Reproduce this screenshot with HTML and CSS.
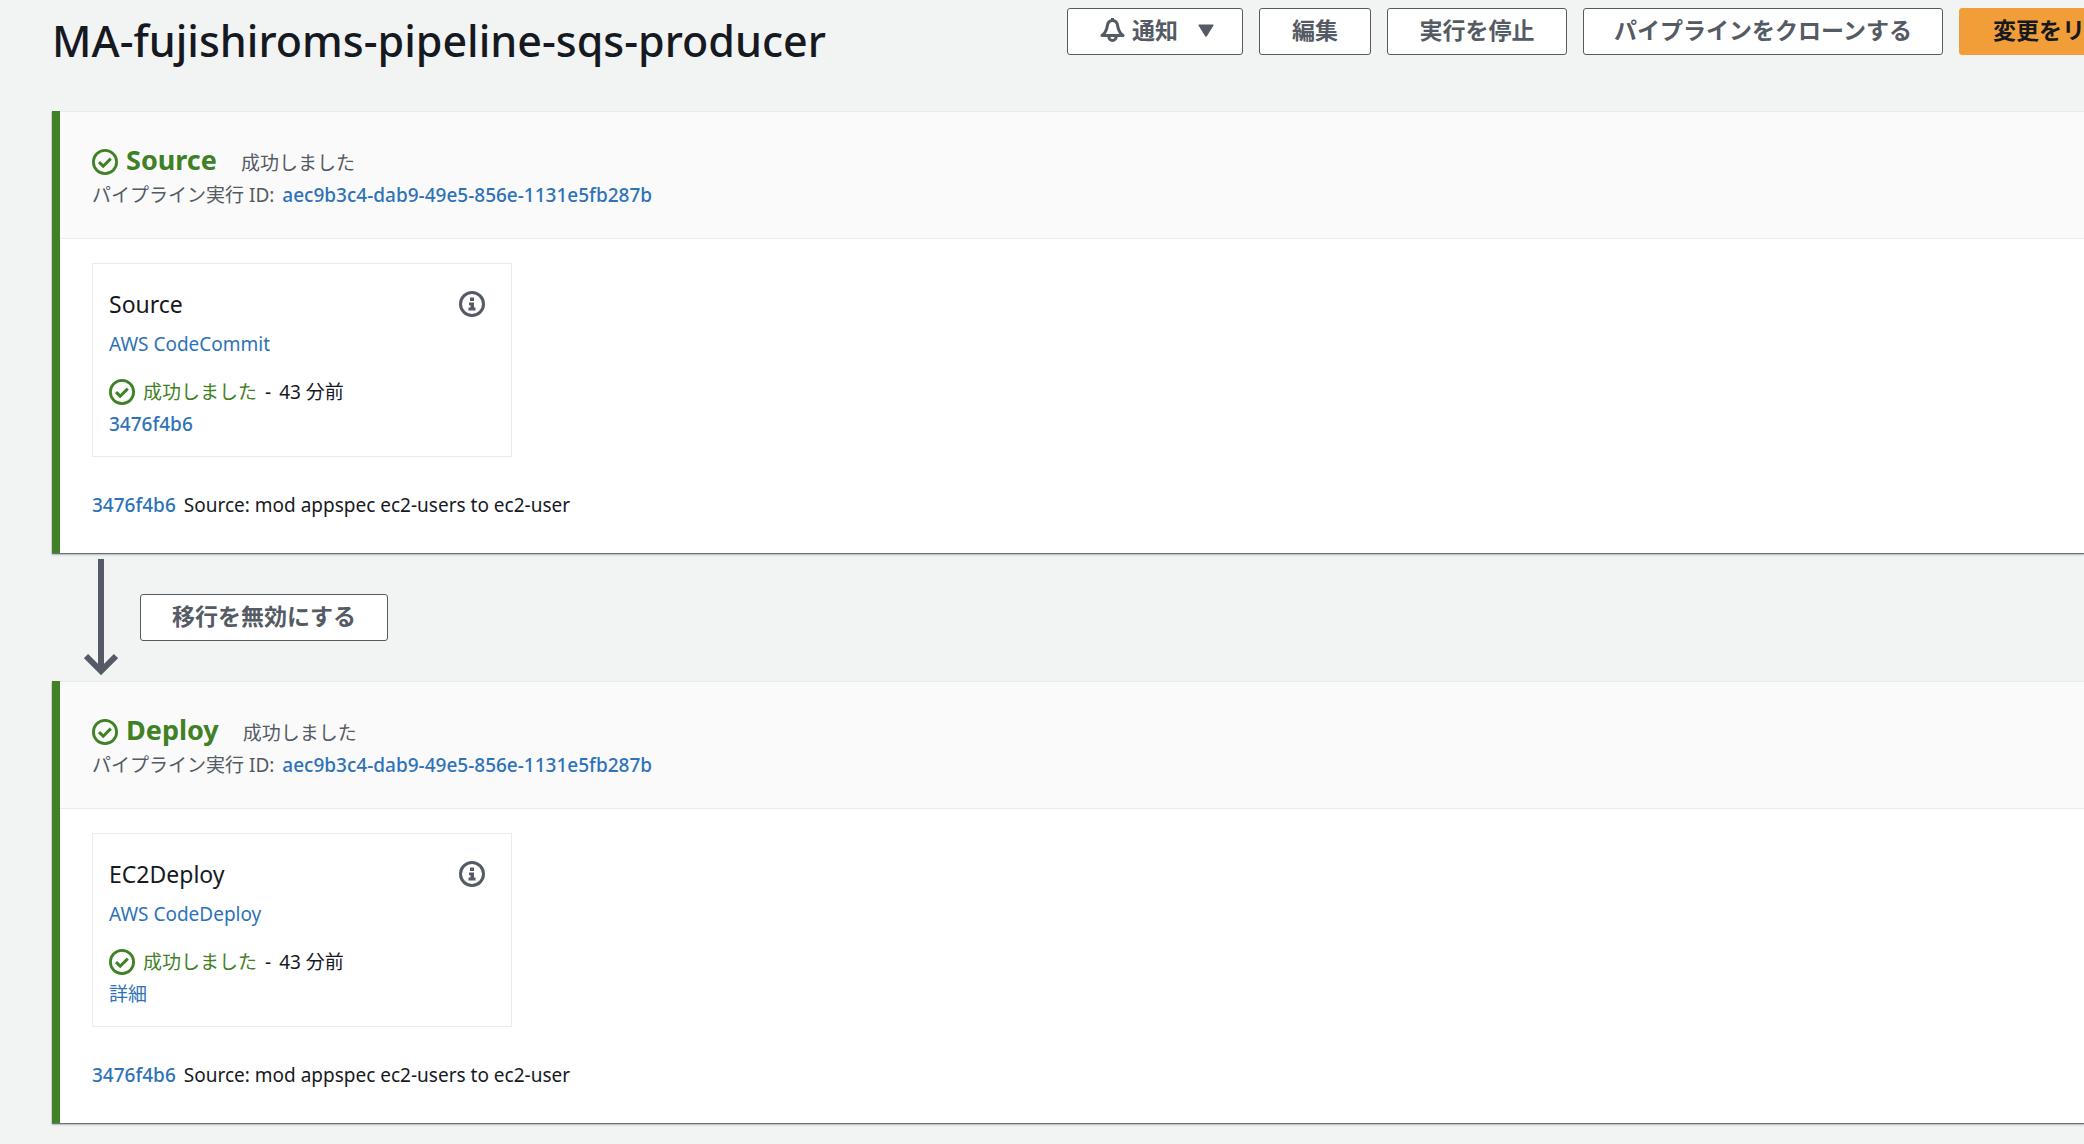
FILE: index.html
```html
<!DOCTYPE html>
<html lang="ja">
<head>
<meta charset="utf-8">
<meta name="viewport" content="width=device-width, initial-scale=1">
<title>MA-fujishiroms-pipeline-sqs-producer</title>
<link rel="stylesheet" href="styles.css">
</head>
<body>
<svg class="sprite" aria-hidden="true">
  <symbol id="check" viewBox="0 0 26 26">
    <circle cx="13" cy="13" r="11.6" fill="none" stroke="currentColor" stroke-width="2.8"/>
    <path d="M7 13.2l4.2 4 7.6-7.6" fill="none" stroke="currentColor" stroke-width="3"/>
  </symbol>
  <symbol id="info" viewBox="0 0 26 26">
    <circle cx="13" cy="13" r="11.5" fill="none" stroke="currentColor" stroke-width="3"/>
    <path d="M11 6.5h4v3.4h-4zM10 11.4h5v5h1.5v3h-7v-3h2v-2.2H10z" fill="currentColor"/>
  </symbol>
</svg>
<main class="page">
  <header class="page-header">
    <h1 class="page-title">MA-fujishiroms-pipeline-sqs-producer</h1>
    <div class="actions">
      <button type="button" class="button button--notify">
        <svg class="bell" viewBox="0 0 25 26" aria-hidden="true">
          <path d="M2 18.500C6 15.500 6.800 12.500 7.300 9C7.800 5.600 9.500 3.500 12.500 3.500S17.200 5.600 17.700 9C18.200 12.500 19 15.500 23 18.500Z" fill="none" stroke="currentColor" stroke-width="3" stroke-linejoin="round"/>
          <path d="M12.500 1v3M8.800 19.500a3.700 4 0 0 0 7.400 0" fill="none" stroke="currentColor" stroke-width="3"/>
        </svg>
        <span>通知</span>
        <svg class="caret" viewBox="0 0 16 13" aria-hidden="true"><path d="M1 .5h14q1 0 .5 1L9 12q-1 1.500-2 0L.5 1.500Q0 .5 1 .5z" fill="currentColor"/></svg>
      </button>
      <button type="button" class="button">編集</button>
      <button type="button" class="button button--stop">実行を停止</button>
      <button type="button" class="button button--clone">パイプラインをクローンする</button>
      <button type="button" class="button button--primary">変更をリ</button>
    </div>
  </header>

  <section class="stage">
    <header class="stage-header">
      <div class="stage-heading">
        <svg class="icon icon--success"><use href="#check"/></svg>
        <h2 class="stage-name">Source</h2>
        <span class="stage-status">成功しました</span>
      </div>
      <p class="execution"><span>パイプライン実行 ID:</span><a class="hash" href="#execution">aec9b3c4-dab9-49e5-856e-1131e5fb287b</a></p>
    </header>
    <div class="stage-body">
      <article class="action">
        <div class="action-heading">
          <h3 class="action-name">Source</h3>
          <button type="button" class="info" aria-label="情報"><svg class="icon"><use href="#info"/></svg></button>
        </div>
        <a class="provider" href="#codecommit">AWS CodeCommit</a>
        <p class="action-status"><svg class="icon icon--success"><use href="#check"/></svg><span class="success">成功しました</span><span>-</span><span>43 分前</span></p>
        <a class="detail hash" href="#commit">3476f4b6</a>
      </article>
      <p class="revision"><a class="hash" href="#commit">3476f4b6</a><span>Source: mod appspec ec2-users to ec2-user</span></p>
    </div>
  </section>

  <div class="transition">
    <svg class="arrow" viewBox="0 0 34 117" aria-hidden="true"><path d="M17 0v112M2 97l15 15 15-15" fill="none" stroke="currentColor" stroke-width="6"/></svg>
    <button type="button" class="button button--transition">移行を無効にする</button>
  </div>

  <section class="stage">
    <header class="stage-header">
      <div class="stage-heading">
        <svg class="icon icon--success"><use href="#check"/></svg>
        <h2 class="stage-name">Deploy</h2>
        <span class="stage-status">成功しました</span>
      </div>
      <p class="execution"><span>パイプライン実行 ID:</span><a class="hash" href="#execution">aec9b3c4-dab9-49e5-856e-1131e5fb287b</a></p>
    </header>
    <div class="stage-body">
      <article class="action">
        <div class="action-heading">
          <h3 class="action-name">EC2Deploy</h3>
          <button type="button" class="info" aria-label="情報"><svg class="icon"><use href="#info"/></svg></button>
        </div>
        <a class="provider" href="#codedeploy">AWS CodeDeploy</a>
        <p class="action-status"><svg class="icon icon--success"><use href="#check"/></svg><span class="success">成功しました</span><span>-</span><span>43 分前</span></p>
        <a class="detail" href="#deployment">詳細</a>
      </article>
      <p class="revision"><a class="hash" href="#commit">3476f4b6</a><span>Source: mod appspec ec2-users to ec2-user</span></p>
    </div>
  </section>
</main>
</body>
</html>
```
FILE: styles.css
```css
* { box-sizing: border-box; }

body {
  margin: 0;
  overflow-x: hidden;
  background: #f2f4f4;
  color: #16191f;
  font: 19px/32px "Noto Sans", "Noto Sans CJK JP", sans-serif;
}

h1, h2, h3, p { margin: 0; }

a { color: #2e72b8; text-decoration: none; }

.sprite { display: none; }

.page { padding: 8px 0 20px 52px; }

.page-header {
  display: flex;
  align-items: flex-start;
  justify-content: space-between;
  height: 103px;
}

.page-title {
  font-size: 43px;
  font-weight: 500;
  line-height: 66px;
  white-space: nowrap;
}

.actions {
  display: flex;
  gap: 16px;
  margin-right: -35px;
}

.button {
  display: flex;
  align-items: center;
  justify-content: center;
  flex: none;
  height: 47px;
  min-width: 112px;
  padding: 0 28px 3px;
  border: 1px solid #545b64;
  border-radius: 3px;
  background: #fff;
  color: #545b64;
  font: 700 23px/32px "Noto Sans", "Noto Sans CJK JP", sans-serif;
  white-space: nowrap;
}

.button--notify { min-width: 175px; padding-left: 32px; }
.button--stop { min-width: 180px; }
.button--clone { min-width: 360px; }
.button--primary { min-width: 160px; border-color: #f19e38; background: #f19e38; color: #16191f; }

.bell { width: 25px; height: 26px; margin-right: 7px; }
.caret { width: 16px; height: 13px; margin-left: 20px; }

.stage {
  border-left: 8px solid #3f8124;
  background: #fff;
  box-shadow: 0 1px 1px #687078, 0 2px 2px rgba(0, 28, 36, 0.2);
}

.stage-header {
  padding: 32px 32px 27px;
  border-top: 1px solid #e9ebed;
  border-bottom: 1px solid #e9ebed;
  background: #fafafa;
}

.stage-heading { display: flex; align-items: baseline; }
.stage-heading .icon { align-self: center; }

.stage-name {
  margin-left: 8px;
  color: #3f8124;
  font-size: 27px;
  line-height: 32px;
}

.stage-status { margin-left: 24px; color: #545b64; }

.icon { display: block; flex: none; width: 26px; height: 26px; }
.icon--success { color: #3f8124; }

.execution { display: flex; gap: 8px; color: #545b64; }

.hash { font-weight: 500; }

.stage-body { padding: 24px 32px 32px; }

.action {
  width: 420px;
  padding: 24px 26px 16px 16px;
  border: 1px solid #e9ebed;
}

.action-heading {
  display: flex;
  align-items: center;
  justify-content: space-between;
}

.action-name { font-size: 23px; font-weight: 400; line-height: 32px; }

.info { padding: 0; border: 0; background: none; color: #545b64; }

.provider { display: block; margin-top: 8px; }

.action-status {
  display: flex;
  align-items: center;
  gap: 8px;
  margin-top: 16px;
}

.success { color: #3f8124; }

.detail { display: block; }

.revision { display: flex; gap: 8px; margin-top: 32px; }

.transition {
  display: flex;
  align-items: center;
  gap: 22px;
  height: 128px;
  padding-left: 32px;
}

.arrow { width: 34px; height: 117px; color: #545b64; }
.button--transition { min-width: 248px; }
```
